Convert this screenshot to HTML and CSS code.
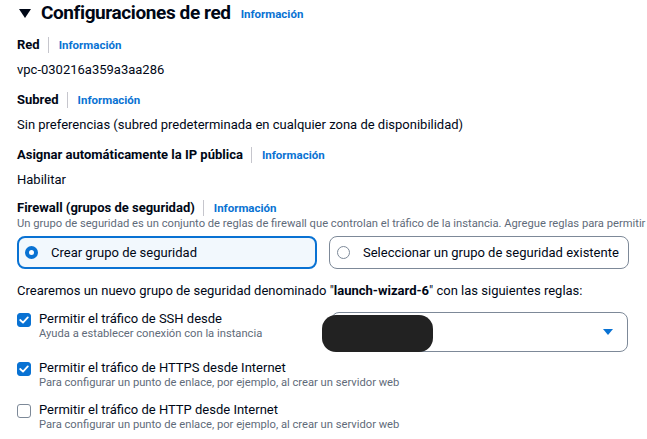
FILE: index.html
```html
<!DOCTYPE html>
<html lang="es">
<head>
<meta charset="utf-8">
<link rel="stylesheet" href="styles.css">
</head>
<body>
<div class="page">
  <div class="heading">
    <svg class="caret" width="12" height="10" viewBox="0 0 12 10"><path d="M0 0 L12 0 L6 9 Z" fill="#000716"/></svg>
    <h2>Configuraciones de red</h2>
    <a class="info big">Información</a>
  </div>

  <div class="field">
    <div class="label"><span>Red</span><i class="sep"></i><a class="info">Información</a></div>
    <div class="value">vpc-030216a359a3aa286</div>
  </div>
  <div class="field">
    <div class="label"><span>Subred</span><i class="sep"></i><a class="info">Información</a></div>
    <div class="value">Sin preferencias (subred predeterminada en cualquier zona de disponibilidad)</div>
  </div>
  <div class="field">
    <div class="label"><span>Asignar automáticamente la IP pública</span><i class="sep"></i><a class="info">Información</a></div>
    <div class="value">Habilitar</div>
  </div>

  <div class="firewall">
    <div class="label"><span>Firewall (grupos de seguridad)</span><i class="sep"></i><a class="info">Información</a></div>
    <div class="desc">Un grupo de seguridad es un conjunto de reglas de firewall que controlan el tráfico de la instancia. Agregue reglas para permitir</div>
    <div class="tiles">
      <div class="tile selected"><span class="radio on"></span>Crear grupo de seguridad</div>
      <div class="tile"><span class="radio"></span>Seleccionar un grupo de seguridad existente</div>
    </div>
  </div>

  <div class="intro">Crearemos un nuevo grupo de seguridad denominado "<b>launch-wizard-6</b>" con las siguientes reglas:</div>

  <div class="rule ssh">
    <div class="check-item">
      <span class="cb on"><svg width="10" height="8" viewBox="0 0 10 8"><path d="M1.2 4 L4 6.6 L8.8 1.4" fill="none" stroke="#fff" stroke-width="1.8" stroke-linecap="round" stroke-linejoin="round"/></svg></span>
      <div class="texts">
        <div class="clabel">Permitir el tráfico de SSH desde</div>
        <div class="cdesc">Ayuda a establecer conexión con la instancia</div>
      </div>
    </div>
    <div class="select">
      <svg width="10" height="7" viewBox="0 0 10 7"><path d="M0 0 L10 0 L5 6 Z" fill="#0972d3"/></svg>
    </div>
    <div class="blob"></div>
  </div>

  <div class="check-item rule https">
    <span class="cb on"><svg width="10" height="8" viewBox="0 0 10 8"><path d="M1.2 4 L4 6.6 L8.8 1.4" fill="none" stroke="#fff" stroke-width="1.8" stroke-linecap="round" stroke-linejoin="round"/></svg></span>
    <div class="texts">
      <div class="clabel">Permitir el tráfico de HTTPS desde Internet</div>
      <div class="cdesc">Para configurar un punto de enlace, por ejemplo, al crear un servidor web</div>
    </div>
  </div>

  <div class="check-item rule http">
    <span class="cb"></span>
    <div class="texts">
      <div class="clabel">Permitir el tráfico de HTTP desde Internet</div>
      <div class="cdesc">Para configurar un punto de enlace, por ejemplo, al crear un servidor web</div>
    </div>
  </div>
</div>
</body>
</html>
```

FILE: styles.css
```css
* { box-sizing: border-box; }
html, body { margin: 0; padding: 0; background: #fff; overflow: hidden; }
body {
  font-family: Roboto, "Liberation Sans", Arial, sans-serif;
  color: #000716;
  font-size: 13px;
  line-height: 20px;
  width: 647px;
  height: 439px;
}
.page { padding: 0 0 0 17px; }
.heading { display: flex; align-items: center; height: 26px; margin-left: 2px; }
.caret { margin-top: 1px; }
h2 { margin: 0 0 0 10px; font-size: 19px; font-weight: 700; line-height: 24px; letter-spacing: -0.4px; }
.info { color: #0972d3; font-weight: 700; font-size: 11.5px; text-decoration: none; }
.info.big { margin-left: 10px; margin-top: 2px; }
.label { display: flex; align-items: center; font-weight: 700; height: 20px; }
.sep { display: inline-block; width: 1px; height: 16px; background: #c6c6cd; margin: 0 10px 0 8px; }
.field { margin-top: 9px; }
.field:first-of-type { margin-top: 9px; }
.value { margin-top: 5px; }
.field + .field { margin-top: 10px; }
.firewall { margin-top: 8px; }
.desc { font-size: 11.2px; color: #5f6b7a; white-space: nowrap; line-height: 14px; margin-top: -1px; }
.tiles { display: flex; gap: 12px; margin-top: 5px; }
.tile {
  width: 300px; height: 33px; border: 1px solid #7d8998; border-radius: 8px;
  display: flex; align-items: center; padding-left: 7px; gap: 13px; white-space: nowrap;
}
.tile.selected { border: 2px solid #0972d3; background: #f2f8fd; padding-left: 6px; }
.radio { width: 13px; height: 13px; border-radius: 50%; border: 1px solid #7d8998; flex: none; }
.radio.on { border: 4px solid #0972d3; background: #fff; }
.intro { margin-top: 12px; }
.intro b { font-weight: 700; }
.rule { margin-top: 8px; }
.https { margin-top: 6px; }
.http { margin-top: 10px; }
.ssh { position: relative; display: flex; align-items: flex-start; }
.check-item { display: flex; gap: 8px; align-items: flex-start; }
.cb {
  width: 14px; height: 14px; border-radius: 3px; border: 1px solid #7d8998;
  margin-top: 4px; flex: none; display: flex; align-items: center; justify-content: center;
}
.cb.on { background: #0972d3; border-color: #0972d3; }
.clabel { line-height: 20px; }
.cdesc { font-size: 11.2px; color: #5f6b7a; line-height: 14px; margin-top: -2px; }
.select {
  margin-left: auto; margin-right: 19px; width: 297px; height: 40px;
  border: 1px solid #7d8998; border-radius: 8px;
  display: flex; align-items: center; justify-content: flex-end; padding-right: 14px;
  margin-top: 3px;
}
.blob {
  position: absolute; left: 305px; top: 6px; width: 111px; height: 37px;
  background: #222; border-radius: 14px;
}
```
